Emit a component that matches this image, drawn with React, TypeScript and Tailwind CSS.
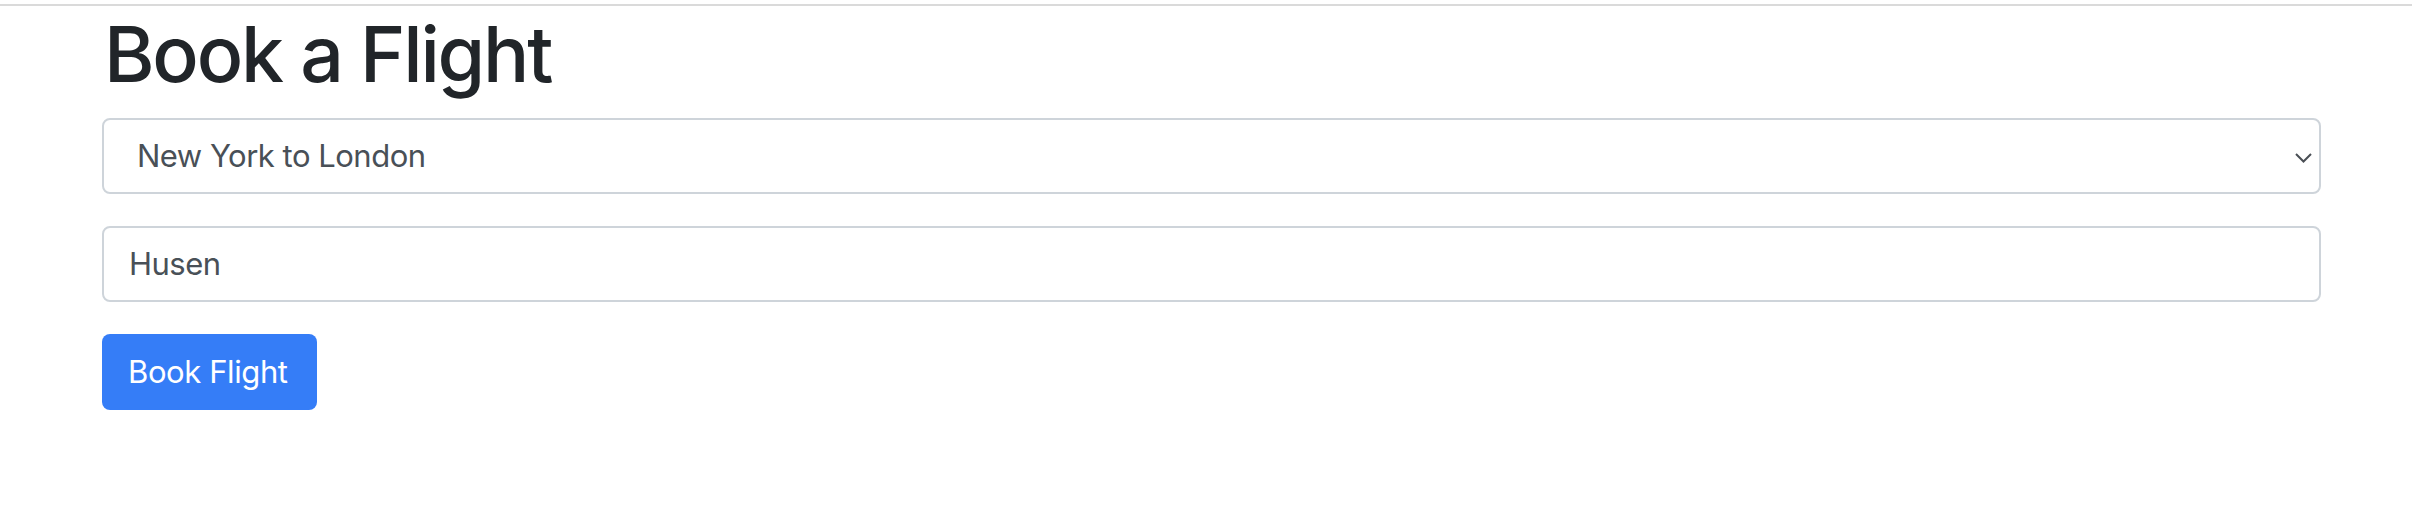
export default function App() {
  return (
    <div className="w-[2412px] h-[532px] bg-white font-['Inter',sans-serif] overflow-hidden">
      <div className="h-[4px]" />
      <div className="h-[2px] bg-[#dadada]" />
      <div className="ml-[102px] w-[2219px]">
        <h1 className="text-[77px] leading-[96px] mb-[16px] font-medium text-[#212529] tracking-[-2.2px] pl-[2px]">
          Book a Flight
        </h1>
        <div className="mb-[32px]">
          <div className="relative h-[76px] border-2 border-[#ced4da] rounded-[8px] flex items-center pl-[33px] text-[31px] tracking-[-0.5px] text-[#495057]">
            New York to London
            <svg
              className="absolute right-[7px] top-[33px]"
              width="17"
              height="10"
              viewBox="0 0 17 10"
              fill="none"
            >
              <path d="M1 1l7.5 7.5L16 1" stroke="#4a4f55" strokeWidth="2" />
            </svg>
          </div>
        </div>
        <div className="mb-[32px]">
          <div className="h-[76px] border-2 border-[#ced4da] rounded-[8px] flex items-center pl-[25px] text-[31px] tracking-[-0.5px] text-[#495057]">
            Husen
          </div>
        </div>
        <button className="h-[76px] w-[215px] bg-[#357df7] rounded-[8px] text-white text-[31px] tracking-[-0.4px] flex items-center pl-[26px]">
          Book Flight
        </button>
      </div>
    </div>
  );
}
